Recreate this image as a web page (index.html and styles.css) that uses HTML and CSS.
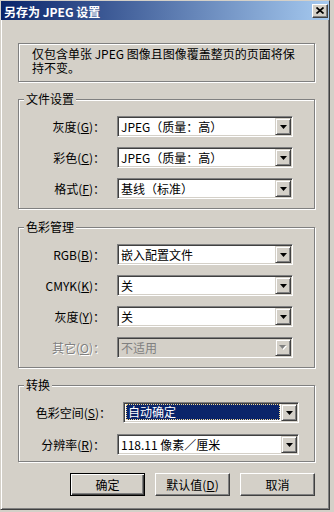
FILE: index.html
```html
<!DOCTYPE html>
<html lang="zh-CN">
<head>
    <meta charset="UTF-8">
    <meta name="viewport" content="width=device-width, initial-scale=1.0">
    <title>另存为 JPEG 设置</title>
    <link rel="stylesheet" href="styles.css">
</head>
<body>
    <div class="window">
        <div class="titlebar">
            <span class="title">另存为 JPEG 设置</span>
            <span class="close-btn">
                <svg width="8" height="7" viewBox="0 0 8 7"><path d="M0.5 0.5L7.5 6.5M7.5 0.5L0.5 6.5" stroke="#000" stroke-width="1.7"/></svg>
            </span>
        </div>

        <div class="content">
            <div class="info">仅包含单张 JPEG 图像且图像覆盖整页的页面将保<br>持不变。</div>

            <div class="group group-file">
                <div class="group-title">文件设置</div>
                <div class="row">
                    <label class="lbl">灰度(<u>G</u>)：</label>
                    <div class="combo"><span class="combo-text">JPEG（质量：高）</span><span class="combo-btn"><svg width="7" height="4" viewBox="0 0 7 4"><path d="M0 0H7L3.5 4Z"/></svg></span></div>
                </div>
                <div class="row">
                    <label class="lbl">彩色(<u>C</u>)：</label>
                    <div class="combo"><span class="combo-text">JPEG（质量：高）</span><span class="combo-btn"><svg width="7" height="4" viewBox="0 0 7 4"><path d="M0 0H7L3.5 4Z"/></svg></span></div>
                </div>
                <div class="row">
                    <label class="lbl">格式(<u>F</u>)：</label>
                    <div class="combo"><span class="combo-text">基线（标准）</span><span class="combo-btn"><svg width="7" height="4" viewBox="0 0 7 4"><path d="M0 0H7L3.5 4Z"/></svg></span></div>
                </div>
            </div>

            <div class="group group-color">
                <div class="group-title">色彩管理</div>
                <div class="row">
                    <label class="lbl">RGB(<u>B</u>)：</label>
                    <div class="combo"><span class="combo-text">嵌入配置文件</span><span class="combo-btn"><svg width="7" height="4" viewBox="0 0 7 4"><path d="M0 0H7L3.5 4Z"/></svg></span></div>
                </div>
                <div class="row">
                    <label class="lbl">CMYK(<u>K</u>)：</label>
                    <div class="combo"><span class="combo-text">关</span><span class="combo-btn"><svg width="7" height="4" viewBox="0 0 7 4"><path d="M0 0H7L3.5 4Z"/></svg></span></div>
                </div>
                <div class="row">
                    <label class="lbl">灰度(<u>Y</u>)：</label>
                    <div class="combo"><span class="combo-text">关</span><span class="combo-btn"><svg width="7" height="4" viewBox="0 0 7 4"><path d="M0 0H7L3.5 4Z"/></svg></span></div>
                </div>
                <div class="row">
                    <label class="lbl disabled">其它(<u>O</u>)：</label>
                    <div class="combo disabled"><span class="combo-text">不适用</span><span class="combo-btn"><svg width="8" height="5" viewBox="0 0 8 5"><path d="M1 1H8L4.5 5Z" fill="#fff"/><path d="M0 0H7L3.5 4Z" fill="#808080"/></svg></span></div>
                </div>
            </div>

            <div class="group group-convert">
                <div class="group-title">转换</div>
                <div class="row">
                    <label class="lbl lbl-wide">色彩空间(<u>S</u>)：</label>
                    <div class="combo"><span class="combo-text selected">自动确定</span><span class="combo-btn"><svg width="7" height="4" viewBox="0 0 7 4"><path d="M0 0H7L3.5 4Z"/></svg></span></div>
                </div>
                <div class="row">
                    <label class="lbl">分辨率(<u>R</u>)：</label>
                    <div class="combo combo-long"><span class="combo-text">118.11 像素／厘米</span><span class="combo-btn"><svg width="7" height="4" viewBox="0 0 7 4"><path d="M0 0H7L3.5 4Z"/></svg></span></div>
                </div>
            </div>

            <div class="buttons">
                <button class="btn btn-default">确定</button>
                <button class="btn">默认值(<u>D</u>)</button>
                <button class="btn">取消</button>
            </div>
        </div>
    </div>
</body>
</html>
```

FILE: styles.css
```css
body {
    margin: 0;
    background-color: #d4d0c8;
    font-family: "Noto Sans CJK SC", sans-serif;
    font-size: 12px;
    color: #000;
}

.window {
    width: 330px;
    height: 510px;
    box-sizing: border-box;
    border: 1px solid;
    border-color: #d4d0c8 #404040 #404040 #d4d0c8;
    box-shadow: inset 1px 1px #fff, inset -1px -1px #808080;
}

.titlebar {
    height: 19px;
    display: flex;
    align-items: center;
    justify-content: space-between;
    padding: 0 1px 0 3px;
    background: linear-gradient(to right, #0a246a, #a6caf0);
    color: #fff;
    font-weight: bold;
    line-height: 14px;
}

.title {
    padding-top: 2px;
}

.close-btn {
    width: 16px;
    height: 14px;
    box-sizing: border-box;
    display: flex;
    align-items: center;
    justify-content: center;
    background-color: #d4d0c8;
    border: 1px solid;
    border-color: #fff #404040 #404040 #fff;
    box-shadow: inset -1px -1px #808080;
}

.content {
    padding: 23px 0 0 17px;
}

.info {
    width: 297px;
    box-sizing: border-box;
    border: 1px solid #808080;
    box-shadow: inset 1px 1px #fff, 1px 1px #fff;
    padding: 3px 8px 6px 13px;
    line-height: 14px;
}

.group {
    width: 297px;
    box-sizing: border-box;
    border: 1px solid #808080;
    box-shadow: inset 1px 1px #fff, 1px 1px #fff;
}

.group-title {
    width: fit-content;
    margin: -8px 0 0 5px;
    padding: 0 2px;
    line-height: 14px;
    background-color: #d4d0c8;
}

.group-file {
    margin-top: 17px;
    padding-bottom: 9px;
}

.group-color {
    margin-top: 18px;
    padding-bottom: 9px;
}

.group-convert {
    margin-top: 17px;
    padding-bottom: 6px;
}

.row {
    display: flex;
    align-items: center;
    margin-top: 10px;
}

.group-color .row:first-of-type {
    margin-top: 8px;
}

.group-convert .row + .row {
    margin-top: 11px;
}

.lbl {
    width: 86px;
    margin-right: 12px;
    text-align: right;
    line-height: 14px;
    white-space: nowrap;
}

.lbl-wide {
    width: 92px;
}

.lbl.disabled {
    color: #808080;
    text-shadow: 1px 1px #fff;
}

.combo {
    width: 176px;
    height: 21px;
    box-sizing: border-box;
    display: flex;
    background-color: #fff;
    border: 1px solid;
    border-color: #808080 #fff #fff #808080;
    box-shadow: inset 1px 1px #404040, inset -1px -1px #d4d0c8;
    padding: 1px;
}

.combo-long {
    width: 182px;
}

.combo.disabled {
    background-color: #d4d0c8;
    color: #808080;
}

.combo-text {
    flex: 1;
    padding-left: 2px;
    line-height: 17px;
    white-space: nowrap;
    overflow: hidden;
}

.combo-text.selected {
    margin: 0 1px 1px;
    padding-left: 1px;
    line-height: 14px;
    background-color: #0a246a;
    color: #fff;
    border: 1px dotted #f5db95;
}

.combo-btn {
    width: 16px;
    height: 17px;
    box-sizing: border-box;
    display: flex;
    align-items: center;
    justify-content: center;
    background-color: #d4d0c8;
    border: 1px solid;
    border-color: #d4d0c8 #404040 #404040 #d4d0c8;
    box-shadow: inset 1px 1px #fff, inset -1px -1px #808080;
}

.buttons {
    width: 297px;
    display: flex;
    justify-content: flex-end;
    gap: 10px;
    margin-top: 11px;
}

.btn {
    width: 75px;
    height: 23px;
    padding: 0;
    font-family: "Noto Sans CJK SC", sans-serif;
    font-size: 12px;
    color: #000;
    background-color: #d4d0c8;
    border: 1px solid;
    border-color: #fff #404040 #404040 #fff;
    box-shadow: inset -1px -1px #808080;
}

.btn-default {
    border-color: #000;
    box-shadow: inset 1px 1px #fff, inset -1px -1px #404040, inset -2px -2px #808080;
}
```
